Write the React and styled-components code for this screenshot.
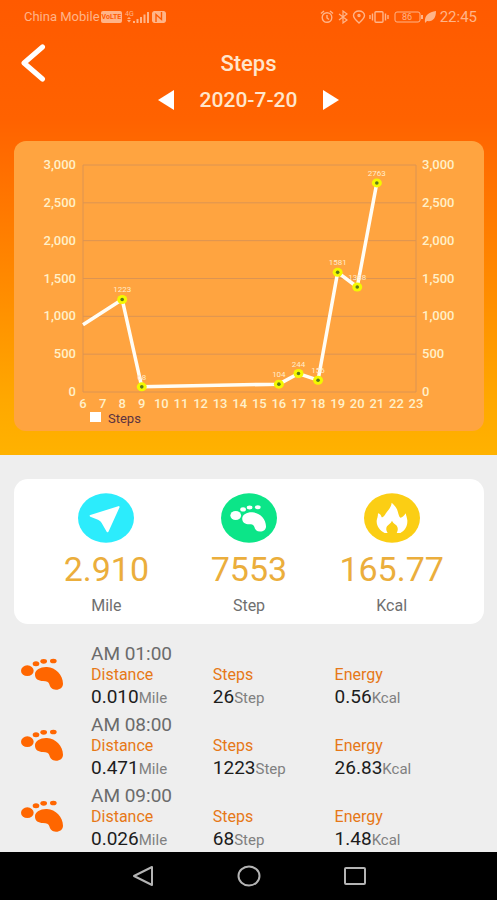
import { useId } from "react";
import styled, { createGlobalStyle } from "styled-components";

const GlobalStyle = createGlobalStyle`
  * {
    box-sizing: border-box;
  }
  body {
    margin: 0;
    background-color: #eeeeee;
    font-family: Roboto, "Noto Sans", sans-serif;
  }
  button {
    display: flex;
    align-items: center;
    justify-content: center;
    padding: 0;
    border: none;
    background: none;
    cursor: pointer;
  }
  svg {
    display: block;
    flex-shrink: 0;
  }
`;

const Screen = styled.div`
  display: flex;
  flex-direction: column;
  min-height: 100vh;
`;

const Hero = styled.header`
  padding-bottom: 24px;
  background: linear-gradient(
    #ff5a00 0%,
    #ff6200 26%,
    #ff7400 42%,
    #ff8c00 64%,
    #ffa800 88%,
    #ffb200 100%
  );
`;

const StatusBar = styled.div`
  display: flex;
  justify-content: space-between;
  align-items: center;
  height: 34px;
  padding: 0 20px 0 24px;
  color: #ffb488;
`;

const StatusGroup = styled.div`
  display: flex;
  align-items: center;
  gap: ${({ $gap }) => $gap}px;
`;

const StatusText = styled.span`
  font-size: ${({ $size }) => $size}px;
  line-height: 16px;
`;

const Volte = styled.span`
  padding: 0 1px;
  border-radius: 2px;
  background-color: #ffb488;
  color: #ff5a00;
  font-size: 7px;
  font-weight: bold;
  line-height: 12px;
`;

const TitleBar = styled.div`
  display: grid;
  grid-template-columns: 48px 1fr 48px;
  align-items: center;
  height: 56px;
  padding: 2px 9px 0;
`;

const Title = styled.h1`
  margin: 0;
  color: #ffe6cc;
  font-size: 22px;
  font-weight: 500;
  text-align: center;
`;

const DateBar = styled.div`
  display: flex;
  justify-content: center;
  align-items: center;
  gap: 26px;
  height: 20px;
`;

const DateText = styled.span`
  color: #ffe6cc;
  font-size: 21px;
  font-weight: 500;
  line-height: 20px;
`;

const ChartCard = styled.section`
  margin: 31px 13px 0 14px;
  border-radius: 12px;
  background-color: #ffa440;
  overflow: hidden;
`;

const ChartSvg = styled.svg`
  width: 100%;
  height: auto;
  font-family: Roboto, "Noto Sans", sans-serif;
`;

const AxisText = styled.text`
  fill: #fff0c8;
  font-size: 13px;
  font-weight: 500;
`;

const PointText = styled.text`
  fill: #ffeccc;
  font-size: 8px;
  text-anchor: middle;
`;

const LegendText = styled.text`
  fill: #5c3340;
  font-size: 13px;
`;

const SummaryCard = styled.section`
  display: grid;
  grid-template-columns: repeat(3, 1fr);
  margin: 24px 13px 0 14px;
  padding: 14px 21px 8px;
  border-radius: 14px;
  background-color: #fff;
`;

const Stat = styled.div`
  display: flex;
  flex-direction: column;
  align-items: center;
`;

const StatValue = styled.strong`
  margin-top: 6px;
  color: #ebae3c;
  font-size: 34px;
  font-weight: normal;
  line-height: 40px;
`;

const StatLabel = styled.span`
  margin-top: 7px;
  color: #6f6f6f;
  font-size: 16px;
  line-height: 20px;
`;

const List = styled.ul`
  display: flex;
  flex-direction: column;
  flex: 1;
  gap: 3px;
  margin: 0;
  padding: 18px 0 0;
  list-style: none;
`;

const Item = styled.li`
  display: grid;
  grid-template-columns: 70px 1fr;
  padding-left: 21px;
`;

const FootBox = styled.div`
  padding-top: 16px;
  color: #ff6600;
`;

const Time = styled.div`
  color: #6b6b6b;
  font-size: 19px;
  line-height: 23px;
`;

const Metrics = styled.div`
  display: grid;
  grid-template-columns: 30% 30% 1fr;
`;

const MetricName = styled.div`
  color: #e67817;
  font-size: 16px;
  line-height: 20px;
`;

const MetricValue = styled.div`
  color: #1c1c1c;
  font-size: 19px;
  line-height: 24px;
`;

const Unit = styled.span`
  color: #808080;
  font-size: 15px;
`;

const NavBar = styled.nav`
  display: flex;
  justify-content: center;
  gap: 58px;
  height: 48px;
  background-color: #000;
`;

const NavButton = styled.button`
  width: 48px;
  color: #b4b4b4;
`;

const points = [
  { hour: 8, steps: 1223 },
  { hour: 9, steps: 68 },
  { hour: 16, steps: 104 },
  { hour: 17, steps: 244 },
  { hour: 18, steps: 156 },
  { hour: 19, steps: 1581 },
  { hour: 20, steps: 1388 },
  { hour: 21, steps: 2763 },
];

const records = [
  { time: "AM 01:00", distance: "0.010", steps: "26", energy: "0.56" },
  { time: "AM 08:00", distance: "0.471", steps: "1223", energy: "26.83" },
  { time: "AM 09:00", distance: "0.026", steps: "68", energy: "1.48" },
];

const ticks = [0, 500, 1000, 1500, 2000, 2500, 3000];
const hours = Array.from({ length: 18 }, (_, i) => i + 6);

const LEFT = 69;
const RIGHT = 402;
const TOP = 24;
const BOTTOM = 251;

const xOf = (hour) => LEFT + ((hour - 6) * (RIGHT - LEFT)) / 17;
const yOf = (steps) => BOTTOM - (steps * (BOTTOM - TOP)) / 3000;

function StepsChart() {
  const line = [
    `${LEFT},${yOf(890)}`,
    ...points.map((p) => `${xOf(p.hour)},${yOf(p.steps)}`),
  ].join(" ");

  return (
    <ChartSvg viewBox="0 0 470 290" role="img" aria-label="Steps per hour">
      <g stroke="#dc9452" strokeWidth="1">
        {ticks.map((t) => (
          <line key={t} x1={LEFT} x2={RIGHT} y1={yOf(t)} y2={yOf(t)} />
        ))}
        <line x1={LEFT} x2={LEFT} y1={TOP} y2={BOTTOM} />
        <line x1={RIGHT} x2={RIGHT} y1={TOP} y2={BOTTOM} />
      </g>
      {ticks.map((t) => (
        <g key={t}>
          <AxisText x={LEFT - 7} y={yOf(t) + 4} textAnchor="end">
            {t.toLocaleString("en-US")}
          </AxisText>
          <AxisText x={RIGHT + 6} y={yOf(t) + 4}>
            {t.toLocaleString("en-US")}
          </AxisText>
        </g>
      ))}
      {hours.map((h) => (
        <AxisText key={h} x={xOf(h)} y={267} textAnchor="middle">
          {h}
        </AxisText>
      ))}
      <polyline
        points={line}
        fill="none"
        stroke="#fffdf5"
        strokeWidth="3.5"
        strokeLinejoin="round"
      />
      {points.map((p) => (
        <g key={p.hour}>
          <ellipse cx={xOf(p.hour)} cy={yOf(p.steps)} rx="5" ry="4.5" fill="#f4f800" />
          <circle cx={xOf(p.hour)} cy={yOf(p.steps)} r="1.8" fill="#5f7a1c" />
          <PointText x={xOf(p.hour)} y={yOf(p.steps) - 7}>
            {p.steps}
          </PointText>
        </g>
      ))}
      <rect x="76" y="271" width="11" height="10" fill="#fff" />
      <LegendText x="94" y="282">
        Steps
      </LegendText>
    </ChartSvg>
  );
}

function FootShape() {
  return (
    <g fill="currentColor">
      <ellipse cx="19" cy="38" rx="19" ry="16" />
      <ellipse cx="45" cy="17" rx="10" ry="7.5" />
      <ellipse cx="68" cy="10" rx="10" ry="7" />
      <ellipse cx="97" cy="9" rx="10" ry="7" />
      <path d="M42 48C43 35 59 26 78 27C104 28 126 51 126 77C126 88 117 95 105 95C93 95 87 88 85 79C83 71 77 69 66 69C53 69 41 63 42 48Z" />
    </g>
  );
}

function FootIcon() {
  return (
    <svg width="42" height="32" viewBox="0 0 126 96" aria-hidden="true">
      <FootShape />
    </svg>
  );
}

function StatIcon({ fill, children }) {
  return (
    <svg width="56" height="50" viewBox="0 0 168 150" color="#fff" aria-hidden="true">
      <ellipse cx="84" cy="75" rx="84" ry="74" fill={fill} />
      {children}
    </svg>
  );
}

function StatusIcons() {
  return (
    <svg
      width="118"
      height="14"
      viewBox="0 0 118 14"
      fill="none"
      stroke="currentColor"
      strokeWidth="1.4"
      aria-hidden="true"
    >
      <circle cx="8" cy="7.5" r="4.8" />
      <path d="M8 5v3l2 1.5M2 3.5 5 1M14 3.5 11 1" />
      <path d="M20 4l8 6-4 3V1l4 3-8 6" strokeWidth="1.2" />
      <path d="M40 13C36 9.500 34.500 8 34.500 5.500A5.500 4.500 0 0 1 45.500 5.500C45.500 8 44 9.500 40 13Z" />
      <circle cx="40" cy="5.500" r="1" />
      <rect x="56" y="1.700" width="8" height="10.600" rx="1" />
      <path d="M53.500 3.500v7M66.500 3.500v7M51 5v4M69 5v4" />
      <rect x="76" y="2" width="25" height="10" rx="2" strokeWidth="1" />
      <path d="M103 5v4" strokeWidth="2" />
      <path d="M106 13C105 5 110 2 117 1C117 8 114 12 108 11Z" fill="currentColor" stroke="none" />
      <text
        x="88"
        y="10"
        textAnchor="middle"
        fill="currentColor"
        stroke="none"
        fontSize="9"
      >
        86
      </text>
    </svg>
  );
}

function SignalIcons() {
  const maskId = useId();

  return (
    <svg width="44" height="14" viewBox="0 0 44 14" fill="currentColor" aria-hidden="true">
      <text x="2" y="6" fontSize="7">
        4G
      </text>
      <path d="M4 9l2-2 2 2zM4 10h4l-2 2.500z" />
      <path d="M10 11h2v2h-2zM13.500 9h2v4h-2zM17 7h2v6h-2zM20.500 4.500h2V13h-2zM24 2h2v11h-2z" />
      <mask id={maskId}>
        <rect x="29" y="1" width="14" height="12" rx="2" fill="#fff" />
        <path d="M33 12V4.500l5.500 5V2" fill="none" stroke="#000" strokeWidth="1.400" />
      </mask>
      <rect x="29" y="1" width="14" height="12" rx="2" mask={`url(#${maskId})`} />
    </svg>
  );
}

export default function App() {
  return (
    <Screen>
      <GlobalStyle />
      <Hero>
        <StatusBar>
          <StatusGroup $gap={1}>
            <StatusText $size={13}>China Mobile</StatusText>
            <Volte>VoLTE</Volte>
            <SignalIcons />
          </StatusGroup>
          <StatusGroup $gap={3}>
            <StatusIcons />
            <StatusText $size={15}>22:45</StatusText>
          </StatusGroup>
        </StatusBar>

        <TitleBar>
          <button type="button" aria-label="Back">
            <svg width="26" height="38" viewBox="0 0 26 38">
              <path
                d="M22.500 3 4 19l18.500 16"
                fill="none"
                stroke="#fff"
                strokeWidth="5"
                strokeLinecap="round"
                strokeLinejoin="round"
              />
            </svg>
          </button>
          <Title>Steps</Title>
        </TitleBar>

        <DateBar>
          <button type="button" aria-label="Previous day">
            <svg width="16" height="20" viewBox="0 0 16 20" fill="#fff">
              <path d="M0 10 16 0v20z" />
            </svg>
          </button>
          <DateText>2020-7-20</DateText>
          <button type="button" aria-label="Next day">
            <svg width="16" height="20" viewBox="0 0 16 20" fill="#fff">
              <path d="M16 10 0 0v20z" />
            </svg>
          </button>
        </DateBar>

        <ChartCard>
          <StepsChart />
        </ChartCard>
      </Hero>

      <SummaryCard>
        <Stat>
          <StatIcon fill="#2cecfc">
            <path
              d="M123 39 37 66C34 67 34 70 37 71L60 80C67 83 71 88 74 95L86 116C88 119 91 118 92 115L125 42Z"
              fill="currentColor"
            />
          </StatIcon>
          <StatValue>2.910</StatValue>
          <StatLabel>Mile</StatLabel>
        </Stat>
        <Stat>
          <StatIcon fill="#0ce588">
            <g transform="translate(28 35) scale(0.85)">
              <FootShape />
            </g>
          </StatIcon>
          <StatValue>7553</StatValue>
          <StatLabel>Step</StatLabel>
        </Stat>
        <Stat>
          <StatIcon fill="#fbce14">
            <path
              d="M83 29C92 38 98 43 101 55C104 65 105 71 109 74C116 74 120 68 125 61C127 70 129 74 130 82C131 99 123 113 109 120H98C104 108 101 101 96 96C88 90 86 88 84 83C81 91 74 93 69 100C65 107 67 113 71 120H62C48 114 37 99 38 83C39 76 42 72 42 61C48 62 51 67 53 73C60 73 65 61 69 56C75 49 82 41 83 29Z"
              fill="currentColor"
            />
          </StatIcon>
          <StatValue>165.77</StatValue>
          <StatLabel>Kcal</StatLabel>
        </Stat>
      </SummaryCard>

      <List>
        {records.map((r) => (
          <Item key={r.time}>
            <FootBox>
              <FootIcon />
            </FootBox>
            <div>
              <Time>{r.time}</Time>
              <Metrics>
                <div>
                  <MetricName>Distance</MetricName>
                  <MetricValue>
                    {r.distance}
                    <Unit>Mile</Unit>
                  </MetricValue>
                </div>
                <div>
                  <MetricName>Steps</MetricName>
                  <MetricValue>
                    {r.steps}
                    <Unit>Step</Unit>
                  </MetricValue>
                </div>
                <div>
                  <MetricName>Energy</MetricName>
                  <MetricValue>
                    {r.energy}
                    <Unit>Kcal</Unit>
                  </MetricValue>
                </div>
              </Metrics>
            </div>
          </Item>
        ))}
      </List>

      <NavBar>
        <NavButton type="button" aria-label="Back">
          <svg width="22" height="22" viewBox="0 0 22 22" fill="none" stroke="currentColor" strokeWidth="2">
            <path d="M2 11 20 2v18z" strokeLinejoin="round" />
          </svg>
        </NavButton>
        <NavButton type="button" aria-label="Home">
          <svg width="24" height="22" viewBox="0 0 24 22" fill="none" stroke="currentColor" strokeWidth="2">
            <ellipse cx="12" cy="11" rx="10.500" ry="9.500" />
          </svg>
        </NavButton>
        <NavButton type="button" aria-label="Recent apps">
          <svg width="22" height="20" viewBox="0 0 22 20" fill="none" stroke="currentColor" strokeWidth="2">
            <rect x="1" y="2" width="20" height="16" rx="1" />
          </svg>
        </NavButton>
      </NavBar>
    </Screen>
  );
}
